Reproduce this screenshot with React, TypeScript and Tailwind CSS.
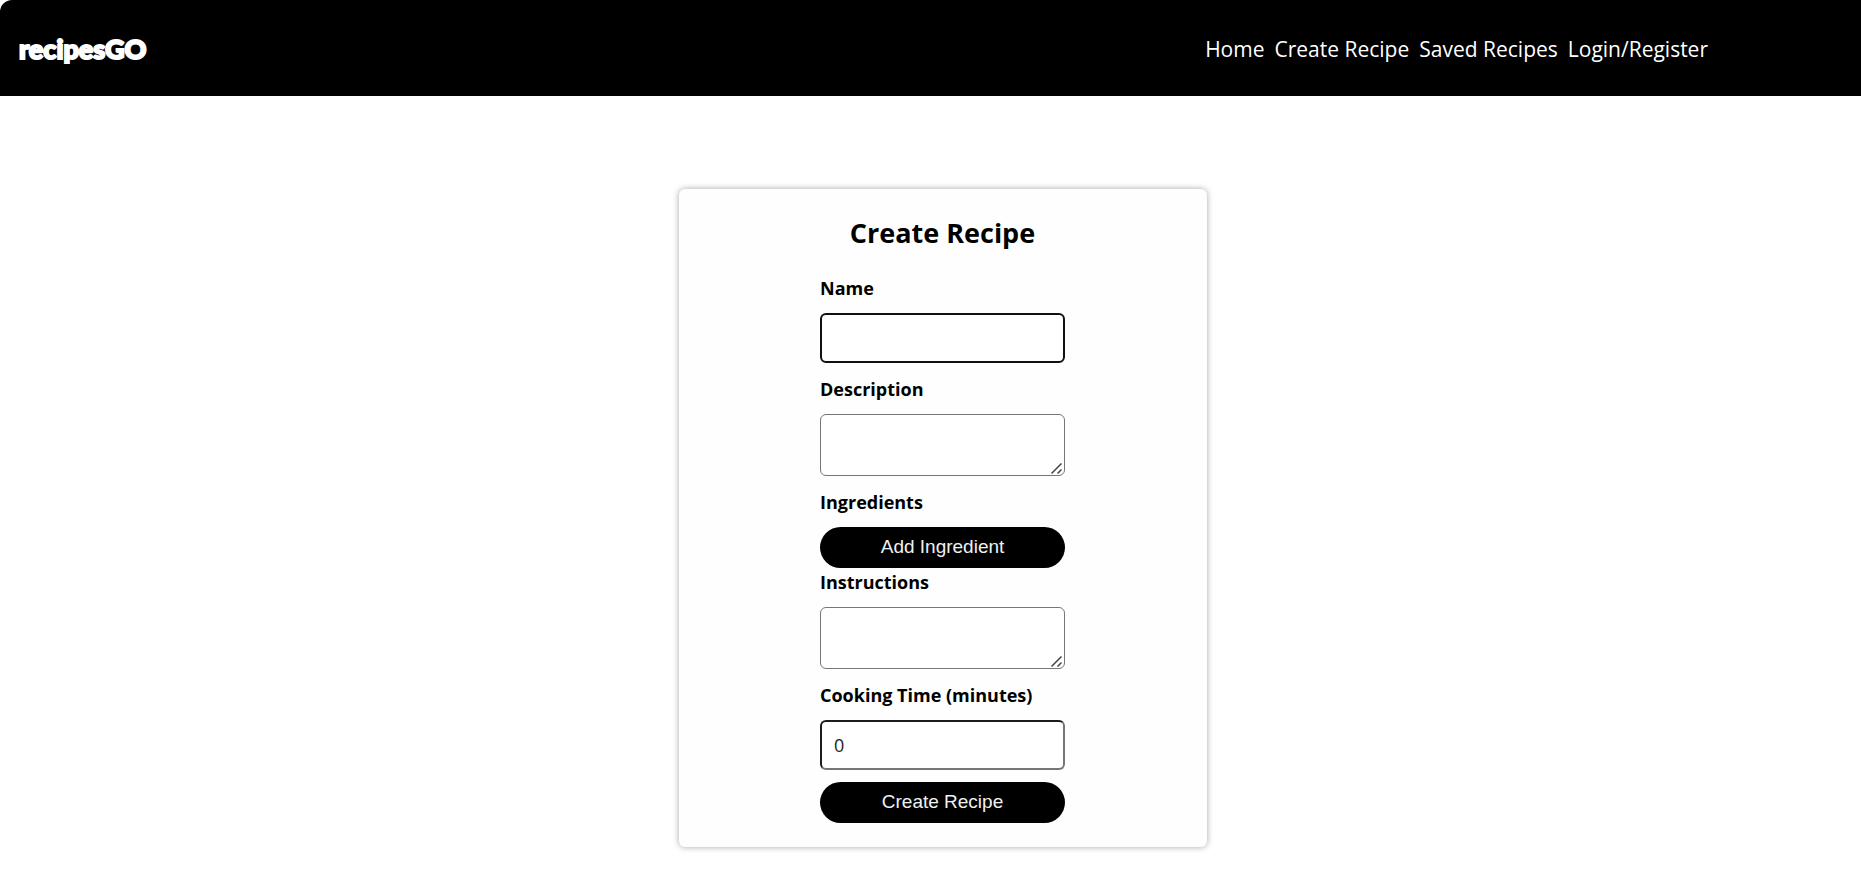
import { useState } from "react";
import type { ReactNode } from "react";

const links = ["Home", "Create Recipe", "Saved Recipes", "Login/Register"];

function Label({ htmlFor, children }: { htmlFor: string; children: ReactNode }) {
  return (
    <label htmlFor={htmlFor} className="mb-[13px] block text-[18px] leading-6 font-bold">
      {children}
    </label>
  );
}

function TextArea({ id }: { id: string }) {
  return (
    <div className="relative mb-[14px] h-[62px]">
      <textarea
        id={id}
        className="block h-full w-full resize-y rounded-md border border-[#767676] bg-white p-3 text-[18px] outline-none [&::-webkit-resizer]:hidden"
      />
      <svg
        className="pointer-events-none absolute right-[3px] bottom-[2px]"
        width="11"
        height="11"
        viewBox="0 0 11 11"
        stroke="#444"
        strokeWidth="1.5"
        aria-hidden="true"
      >
        <path d="M0.5 10.5 10.5 0.5M6.5 10.5 10.5 6.5" />
      </svg>
    </div>
  );
}

const buttonClass =
  "block w-full rounded-full bg-black pt-2 pb-[9px] font-['Liberation_Sans',sans-serif] text-[19px] leading-6 text-[#f0f0f0]";

export default function App() {
  const [minutes, setMinutes] = useState("0");

  return (
    <div className="min-h-screen bg-white font-['Open_Sans',sans-serif] text-black">
      <header className="flex h-24 items-center justify-between rounded-tl-xl bg-black pt-0.5 pr-[153px] pl-[19px] text-white">
        <a
          href="#"
          className="font-['Lato',sans-serif] text-[27px] leading-8 font-black [-webkit-text-stroke:2px_white]"
        >
          recipesGO
        </a>
        <nav className="flex gap-[10px] text-[21px] leading-8">
          {links.map((link) => (
            <a key={link} href="#">
              {link}
            </a>
          ))}
        </nav>
      </header>

      <main className="flex justify-center pt-[93px] pl-6">
        <section className="w-full max-w-[528px] rounded-md bg-[#fefefe] pt-6 pb-6 shadow-[0_0_6px_rgba(0,0,0,0.35)]">
          <h1 className="mb-[23px] text-center text-[27px] leading-10 font-bold">Create Recipe</h1>
          <form className="mx-auto w-[245px]" onSubmit={(e) => e.preventDefault()}>
            <Label htmlFor="name">Name</Label>
            <input
              id="name"
              type="text"
              className="mb-[14px] block h-[50px] w-full rounded-md border-2 border-[#101010] bg-white px-3 text-[18px] outline-none"
            />
            <Label htmlFor="description">Description</Label>
            <TextArea id="description" />
            <Label htmlFor="ingredients">Ingredients</Label>
            <button id="ingredients" type="button" className={buttonClass + " mb-0.5"}>
              Add Ingredient
            </button>
            <Label htmlFor="instructions">Instructions</Label>
            <TextArea id="instructions" />
            <Label htmlFor="cookingTime">Cooking Time (minutes)</Label>
            <input
              id="cookingTime"
              type="number"
              value={minutes}
              onChange={(e) => setMinutes(e.target.value)}
              className="mb-3 block h-[50px] w-full rounded-md border-2 border-t-[#1c1c1c] border-r-[#767676] border-b-[#767676] border-l-[#1c1c1c] bg-white px-3 text-[18px] text-[#222] outline-none"
            />
            <button type="submit" className={buttonClass}>
              Create Recipe
            </button>
          </form>
        </section>
      </main>
    </div>
  );
}
